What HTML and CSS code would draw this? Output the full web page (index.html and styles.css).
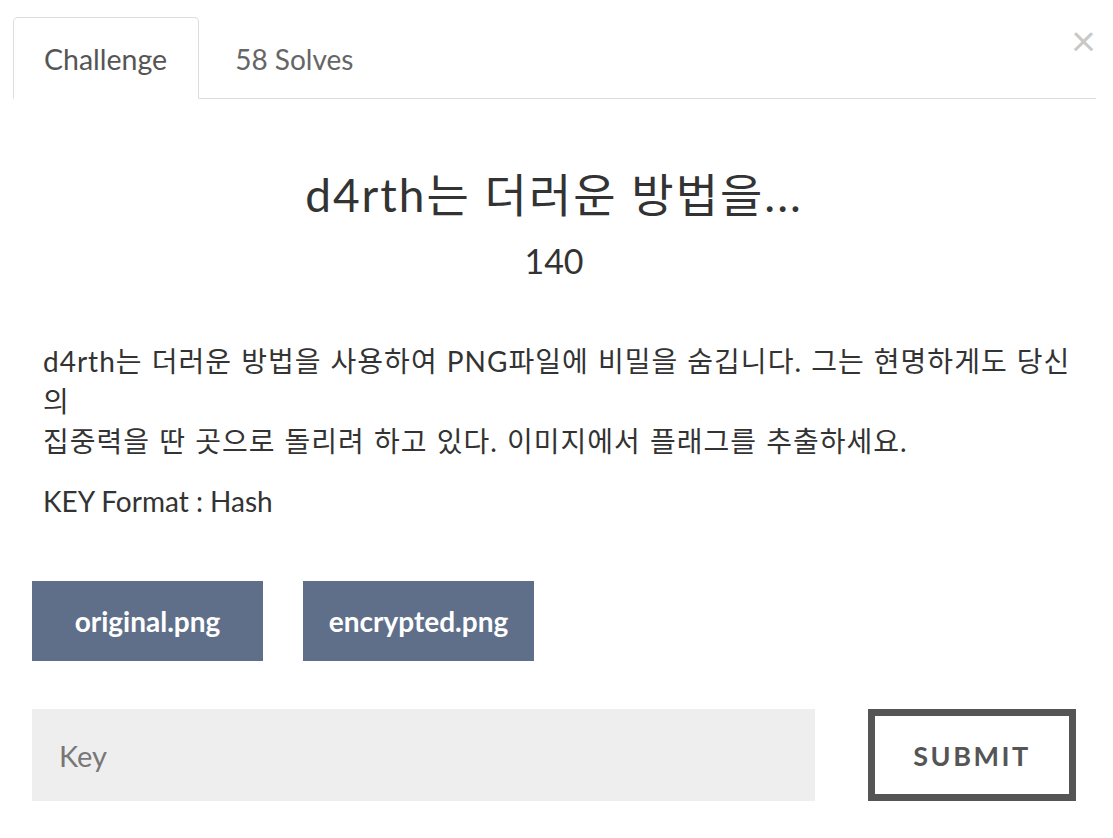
FILE: index.html
```html
<!DOCTYPE html>
<html lang="ko">
<head>
  <meta charset="UTF-8" />
  <meta name="viewport" content="width=device-width, initial-scale=1.0" />
  <title>Challenge</title>
  <link rel="stylesheet" href="styles.css">
</head>
<body>
  <div class="modal">
    <button class="close" aria-label="Close">&times;</button>

    <ul class="nav-tabs">
      <li class="tab active">Challenge</li>
      <li class="tab">58 Solves</li>
    </ul>

    <div class="tab-content">
      <h2 class="challenge-name">d4rth는 더러운 방법을...</h2>
      <h3 class="challenge-value">140</h3>

      <div class="challenge-desc">
        <p>d4rth는 더러운 방법을 사용하여 PNG파일에 비밀을 숨깁니다. 그는 현명하게도 당신의<br>집중력을 딴 곳으로 돌리려 하고 있다. 이미지에서 플래그를 추출하세요.</p>
        <p>KEY Format : Hash</p>
      </div>

      <div class="files">
        <a class="file-btn" href="#">original.png</a>
        <a class="file-btn" href="#">encrypted.png</a>
      </div>

      <div class="submit-row">
        <input class="key-input" type="text" placeholder="Key">
        <button class="submit-btn">Submit</button>
      </div>
    </div>
  </div>
</body>
</html>
```

FILE: styles.css
```css
* {
  margin: 0;
  padding: 0;
  box-sizing: border-box;
}

body {
  font-family: Lato, "Noto Sans CJK KR", sans-serif;
  background: #fff;
  color: #333;
}

.modal {
  position: relative;
  padding: 17px 17px 0 13px;
}

.close {
  position: absolute;
  top: 18px;
  right: 17px;
  background: none;
  border: none;
  font-family: Lato, sans-serif;
  font-size: 43px;
  line-height: 1;
  color: #c8c8c8;
  cursor: pointer;
}

.nav-tabs {
  list-style: none;
  display: flex;
  border-bottom: 1px solid #ddd;
}

.tab {
  height: 82px;
  margin-bottom: -1px;
  padding: 0 31px 0 30px;
  font-size: 28.5px;
  line-height: 82px;
  color: #666;
  border: 1px solid transparent;
  border-radius: 5px 5px 0 0;
}

.tab.active {
  color: #555;
  background: #fff;
  border-color: #ddd #ddd #fff;
}

.tab + .tab {
  padding-left: 35px;
  font-size: 28px;
}

.tab-content {
  padding: 0 20px 0 19px;
}

.challenge-name {
  margin-top: 68px;
  font-size: 46px;
  font-weight: 400;
  letter-spacing: 2px;
  line-height: 55px;
  text-align: center;
}

.challenge-value {
  margin-top: 18px;
  font-size: 34px;
  font-weight: 400;
  line-height: 41px;
  text-align: center;
}

.challenge-desc {
  margin-top: 60px;
  padding: 0 0 0 11px;
  font-size: 28px;
  letter-spacing: 1px;
  word-spacing: 1px;
  line-height: 40px;
}

.challenge-desc p + p {
  margin-top: 20px;
  letter-spacing: 0;
  word-spacing: 0;
}

.files {
  display: flex;
  gap: 40px;
  margin-top: 60px;
}

.file-btn {
  display: flex;
  align-items: center;
  justify-content: center;
  width: 231px;
  height: 80px;
  background: #5f6f8a;
  color: #fff;
  font-size: 28px;
  font-weight: 700;
  text-decoration: none;
}

.submit-row {
  display: flex;
  justify-content: space-between;
  margin-top: 48px;
}

.key-input {
  width: 783px;
  height: 92px;
  padding: 0 27px;
  border: none;
  background: #eee;
  font-family: Lato, sans-serif;
  font-size: 29px;
  color: #333;
  outline: none;
}

.key-input::placeholder {
  color: #777;
}

.submit-btn {
  width: 208px;
  height: 92px;
  border: 7px solid #555;
  background: #fff;
  font-family: Lato, sans-serif;
  font-size: 27px;
  font-weight: 700;
  letter-spacing: 2.5px;
  text-transform: uppercase;
  color: #555;
  cursor: pointer;
}
```
